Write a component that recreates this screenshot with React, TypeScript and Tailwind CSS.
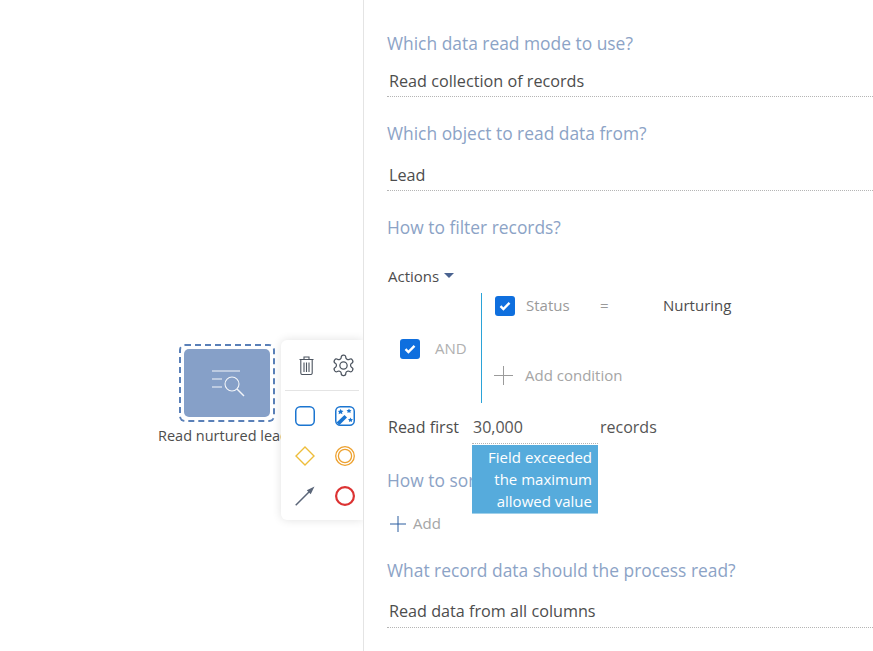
const Check = ({ className }: { className: string }) => (
  <span className={`flex h-5 w-5 items-center justify-center rounded-[3px] bg-[#0f6fde] ${className}`}>
    <svg width="12" height="10" viewBox="0 0 12 10" fill="none">
      <path d="M1.5 5.2 4.400 8 10.500 1.800" stroke="#fff" strokeWidth="2.400" />
    </svg>
  </span>
);

const Plus = ({ size, color }: { size: number; color: string }) => (
  <svg width={size} height={size} viewBox="0 0 20 20" fill="none" stroke={color} strokeWidth={20 / size}>
    <path d="M10 0v20M0 10h20" />
  </svg>
);

const Heading = ({ children, className = "" }: { children: string; className?: string }) => (
  <h3 className={`h-6 text-[17.400px] leading-[23px] text-[#8ca3c6] ${className}`}>{children}</h3>
);

const Value = ({ children, className = "", tall = false }: { children: string; className?: string; tall?: boolean }) => (
  <div className={`border-b border-dotted border-[#b5b5b5] pl-0.5 text-[16.200px] leading-[30px] text-[#4d4d4d] ${tall ? "h-[32px]" : "h-[31px]"} ${className}`}>
    {children}
  </div>
);

function Toolbar() {
  return (
    <div className="absolute left-[281px] top-[340px] h-[180px] w-[82px] rounded-l-md bg-white shadow-[0_0_10px_rgba(0,0,0,0.12)]">
      <div className="mx-[4px] flex h-[51px] items-center gap-[17px] border-b border-[#e4e4e4] pl-[14px]">
        <svg width="15" height="19" viewBox="0 0 15 19" fill="none" stroke="#4d5560" strokeWidth="1.100">
          <path d="M0.500 3.500h14M5 3V1h5v2M1.800 4v13a1.500 1.500 0 0 0 1.500 1.500h8.400a1.500 1.500 0 0 0 1.500-1.500V4M5 6.500v9.500M7.500 6.500v9.500M10 6.500v9.500" />
        </svg>
        <svg width="25" height="25" viewBox="0 0 24 24" fill="none" stroke="#4d5560" strokeWidth="1.200">
          <path d="M12.200 2h-.4a2 2 0 0 0-2 2v.2a2 2 0 0 1-1 1.700l-.4.200a2 2 0 0 1-2 0l-.2-.1a2 2 0 0 0-2.700.7l-.2.400a2 2 0 0 0 .7 2.700l.2.100a2 2 0 0 1 1 1.700v.5a2 2 0 0 1-1 1.700l-.2.100a2 2 0 0 0-.7 2.700l.2.400a2 2 0 0 0 2.700.7l.2-.1a2 2 0 0 1 2 0l.4.200a2 2 0 0 1 1 1.700v.2a2 2 0 0 0 2 2h.4a2 2 0 0 0 2-2v-.2a2 2 0 0 1 1-1.700l.4-.2a2 2 0 0 1 2 0l.2.100a2 2 0 0 0 2.700-.7l.2-.4a2 2 0 0 0-.7-2.700l-.2-.1a2 2 0 0 1-1-1.700v-.5a2 2 0 0 1 1-1.700l.2-.1a2 2 0 0 0 .7-2.700l-.2-.4a2 2 0 0 0-2.700-.7l-.2.100a2 2 0 0 1-2 0l-.4-.2a2 2 0 0 1-1-1.700V4a2 2 0 0 0-2-2Z" />
          <circle cx="12" cy="12" r="3.500" />
        </svg>
      </div>
      <div className="mt-[15px] grid grid-cols-[40px_20px] gap-y-[20px] pl-[14px]">
        <svg width="20" height="20" viewBox="0 0 20 20" fill="none">
          <rect x="0.750" y="0.750" width="18.500" height="18.500" rx="4.500" stroke="#1b75d0" strokeWidth="1.500" />
        </svg>
        <svg width="20" height="20" viewBox="0 0 20 20" fill="none">
          <rect x="0.750" y="0.750" width="18.500" height="18.500" rx="4.500" stroke="#1b75d0" strokeWidth="1.500" />
          <path d="M1.500 16.500 9.500 9l2.500 2.500L4.500 19Z" fill="#1b75d0" />
          <path d="m5.500 2.800 1 1.800 2 .3-1.500 1.400.4 2-1.900-1-1.900 1 .4-2L3 4.900l2-.3Zm8.500-.3.800 1.500 1.700.2-1.200 1.200.3 1.600-1.600-.8-1.600.8.3-1.600-1.200-1.200 1.700-.2Zm1.500 9 .8 1.500 1.700.2-1.200 1.200.3 1.600-1.600-.8-1.600.8.3-1.600-1.200-1.200 1.700-.2Z" fill="#1b75d0" />
        </svg>
        <svg width="20" height="20" viewBox="0 0 20 20" fill="none" stroke="#eebd3a" strokeWidth="1.400">
          <path d="M10 1 19 10 10 19 1 10Z" />
        </svg>
        <svg width="20" height="20" viewBox="0 0 20 20" fill="none" stroke="#eda12f">
          <circle cx="10" cy="10" r="9.300" strokeWidth="1.300" />
          <circle cx="10" cy="10" r="6.600" strokeWidth="1.300" />
        </svg>
        <svg width="20" height="20" viewBox="0 0 20 20" fill="none">
          <path d="M.7 19.300 15.500 4.500" stroke="#5b6679" strokeWidth="1.500" />
          <path d="M19.500.5 11.800 4.300l3.900 3.900Z" fill="#5b6679" />
        </svg>
        <svg width="20" height="20" viewBox="0 0 20 20" fill="none" stroke="#dc3232" strokeWidth="2.200">
          <circle cx="10" cy="10" r="8.900" />
        </svg>
      </div>
    </div>
  );
}

function Canvas() {
  return (
    <div className="relative h-full w-[363px] shrink-0 overflow-hidden">
      <div className="absolute left-[179px] top-[344px] h-[78px] w-[96px] rounded-md border-2 border-dashed border-[#5a80b8] p-[3px]">
        <div className="flex h-full w-full items-center justify-center rounded-[5px] bg-[#86a0c8]">
          <svg width="36" height="30" viewBox="0 0 36 30" fill="none" stroke="#fff" strokeWidth="1.100" className="opacity-90">
            <path d="M3 3h28M3 11h10M3 19h10" />
            <circle cx="23" cy="16" r="7" />
            <path d="m28 21 7 7" strokeWidth="1.400" />
          </svg>
        </div>
      </div>
      <div className="absolute left-[158px] top-[426px] whitespace-nowrap text-[14.500px] leading-5 text-[#4d4d4d]">
        Read nurtured leads
      </div>
      <Toolbar />
    </div>
  );
}

export default function App() {
  return (
    <div className="flex h-[651px] w-[873px] overflow-hidden bg-white font-['Open_Sans',sans-serif]">
      <Canvas />
      <div className="min-w-0 flex-1 border-l border-[#e4e4e4] pl-[23px] pt-[32px]">
        <Heading>Which data read mode to use?</Heading>
        <Value className="mt-[10px]">Read collection of records</Value>

        <Heading className="mt-[25px]">Which object to read data from?</Heading>
        <Value className="mt-[14px]">Lead</Value>

        <Heading className="mt-[25px]">How to filter records?</Heading>

        <div className="mt-[24px] flex h-6 items-center gap-[5px] pl-px text-[15px] text-[#4d4d4d]">
          Actions
          <span className="mt-[-1px] h-0 w-0 border-x-[5.500px] border-t-[5px] border-x-transparent border-t-[#4a6390]" />
        </div>

        <div className="mt-[5px] flex h-[110px]">
          <div className="flex w-[94px] shrink-0 items-center pl-[13px] pt-[1px]">
            <Check className="shrink-0" />
            <span className="ml-[15px] text-[15px] text-[#b0b0b0]">AND</span>
          </div>
          <div className="w-px shrink-0 bg-[#2ba3d8]" />
          <div className="min-w-0 flex-1 pl-[13px] pt-[3px]">
            <div className="flex h-5 items-center text-[15px] text-[#9a9a9a]">
              <Check className="shrink-0" />
              <span className="ml-[11px] w-[74px] pb-[2px]">Status</span>
              <span className="w-[63px] pb-[2px]">=</span>
              <span className="pb-[2px] text-[#4d4d4d]">Nurturing</span>
            </div>
            <div className="mt-[49px] flex h-5 items-center text-[15px] text-[#a5a5a5]">
              <span className="-ml-px"><Plus size={19} color="#9b9b9b" /></span>
              <span className="ml-3">Add condition</span>
            </div>
          </div>
        </div>

        <div className="relative mt-[9px] flex h-8 items-center pb-[2px] text-[16px] text-[#4d4d4d]">
          <span className="w-[85px] shrink-0 pl-px">Read first</span>
          <span className="w-[128px] shrink-0 pl-[1px] text-[#555]">30,000</span>
          <span className="text-[#555]">records</span>
          <div className="absolute bottom-0 left-[85px] w-[126px] border-b border-dotted border-[#b5b5b5]" />
          <div className="absolute left-[85px] top-[33px] z-10 h-[69px] w-[126px] border-b border-[#9fd0ea] bg-[#56abdc] pr-[6px] pt-[1px] text-right text-[15px] leading-[22px] text-white">
            <div>Field exceeded</div>
            <div>the maximum</div>
            <div>allowed value</div>
          </div>
        </div>

        <Heading className="mt-[25px]">How to sort records?</Heading>

        <div className="mt-[19px] flex h-6 items-center text-[15px] text-[#a5a5a5]">
          <span className="ml-[3px]"><Plus size={16} color="#2a5d9f" /></span>
          <span className="ml-[7px] pb-[2px]">Add</span>
        </div>

        <Heading className="mt-[23px]">What record data should the process read?</Heading>
        <Value tall className="mt-[13px]">Read data from all columns</Value>
      </div>
    </div>
  );
}
